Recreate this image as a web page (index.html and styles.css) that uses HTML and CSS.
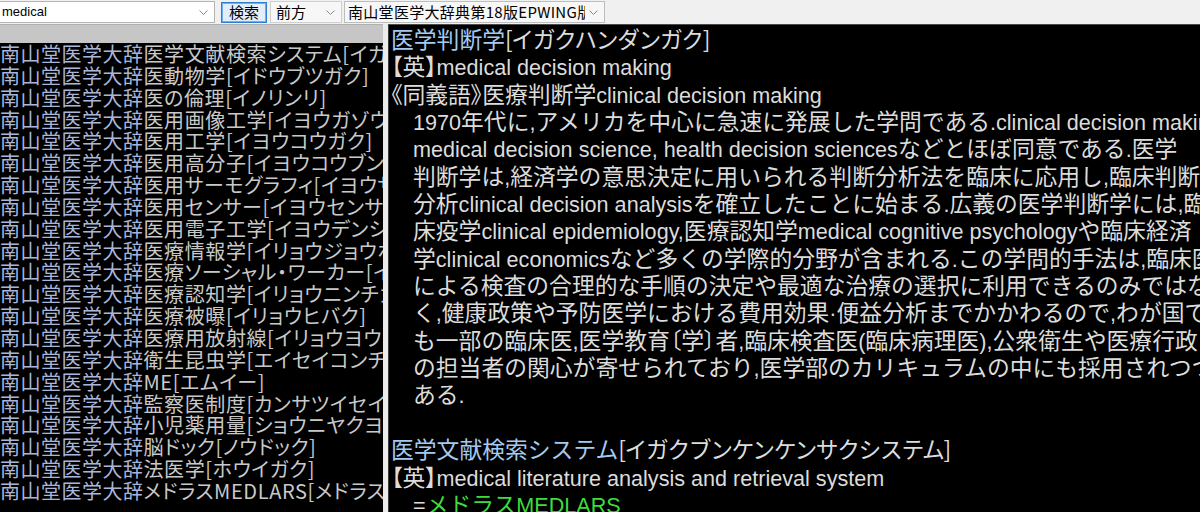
FILE: index.html
```html
<!DOCTYPE html>
<html lang="ja">
<head>
<meta charset="utf-8">
<title>EPWING viewer</title>
<link rel="stylesheet" href="styles.css">
</head>
<body>
<div class="app">
  <div class="toolbar">
    <div class="combo query">
      <span class="val latin">medical</span>
      <svg class="chev" width="9" height="5" viewBox="0 0 9 5"><path d="M0.5 0.5 L4.5 4.5 L8.5 0.5" fill="none" stroke="#8a8a8a" stroke-width="1"/></svg>
    </div>
    <div class="btn">検索</div>
    <div class="combo mode">
      <span class="val">前方</span>
      <svg class="chev" width="9" height="5" viewBox="0 0 9 5"><path d="M0.5 0.5 L4.5 4.5 L8.5 0.5" fill="none" stroke="#8a8a8a" stroke-width="1"/></svg>
    </div>
    <div class="combo dict">
      <span class="val">南山堂医学大辞典第18版EPWING版</span>
      <svg class="chev" width="9" height="5" viewBox="0 0 9 5"><path d="M0.5 0.5 L4.5 4.5 L8.5 0.5" fill="none" stroke="#8a8a8a" stroke-width="1"/></svg>
    </div>
  </div>
  <div class="main">
    <div class="left">
      <div class="header"></div>
      <ul class="list">
        <li><span class="src">南山堂医学大辞</span><span class="ent">医学文献検索システム[イガクブンケンケンサクシステム]</span></li>
        <li><span class="src">南山堂医学大辞</span><span class="ent">医動物学[イドウブツガク]</span></li>
        <li><span class="src">南山堂医学大辞</span><span class="ent">医の倫理[イノリンリ]</span></li>
        <li><span class="src">南山堂医学大辞</span><span class="ent">医用画像工学[イヨウガゾウコウガク]</span></li>
        <li><span class="src">南山堂医学大辞</span><span class="ent">医用工学[イヨウコウガク]</span></li>
        <li><span class="src">南山堂医学大辞</span><span class="ent">医用高分子[イヨウコウブンシ]</span></li>
        <li><span class="src">南山堂医学大辞</span><span class="ent">医用サーモグラフィ[イヨウサーモグラフィ]</span></li>
        <li><span class="src">南山堂医学大辞</span><span class="ent">医用センサー[イヨウセンサー]</span></li>
        <li><span class="src">南山堂医学大辞</span><span class="ent">医用電子工学[イヨウデンシコウガク]</span></li>
        <li><span class="src">南山堂医学大辞</span><span class="ent">医療情報学[イリョウジョウホウガク]</span></li>
        <li><span class="src">南山堂医学大辞</span><span class="ent">医療ソーシャル・ワーカー[イリョウソーシャルワーカー]</span></li>
        <li><span class="src">南山堂医学大辞</span><span class="ent">医療認知学[イリョウニンチガク]</span></li>
        <li><span class="src">南山堂医学大辞</span><span class="ent">医療被曝[イリョウヒバク]</span></li>
        <li><span class="src">南山堂医学大辞</span><span class="ent">医療用放射線[イリョウヨウホウシャセン]</span></li>
        <li><span class="src">南山堂医学大辞</span><span class="ent">衛生昆虫学[エイセイコンチュウガク]</span></li>
        <li><span class="src">南山堂医学大辞</span><span class="ent">ME[エムイー]</span></li>
        <li><span class="src">南山堂医学大辞</span><span class="ent">監察医制度[カンサツイセイド]</span></li>
        <li><span class="src">南山堂医学大辞</span><span class="ent">小児薬用量[ショウニヤクヨウリョウ]</span></li>
        <li><span class="src">南山堂医学大辞</span><span class="ent">脳ドック[ノウドック]</span></li>
        <li><span class="src">南山堂医学大辞</span><span class="ent">法医学[ホウイガク]</span></li>
        <li><span class="src">南山堂医学大辞</span><span class="ent">メドラスMEDLARS[メドラス]</span></li>
      </ul>
    </div>
    <div class="splitter"></div>
    <div class="right">
      <div class="ln"><span class="hw">医学判断学</span><span class="rd">[イガクハンダンガク]</span></div>
      <div class="ln"><span class="p">【英】</span><span class="en">medical decision making</span></div>
      <div class="ln"><span class="p">《同義語》</span>医療判断学<span class="en">clinical decision making</span></div>
      <div class="ln ind"><span class="en">1970</span>年代に<span class="en">,</span>アメリカを中心に急速に発展した学問である<span class="en">.clinical decision making</span></div>
      <div class="ln ind"><span class="en">medical decision science, health decision sciences</span>などとほぼ同意である<span class="en">.</span>医学</div>
      <div class="ln ind">判断学は<span class="en">,</span>経済学の意思決定に用いられる判断分析法を臨床に応用し<span class="en">,</span>臨床判断</div>
      <div class="ln ind">分析<span class="en">clinical decision analysis</span>を確立したことに始まる<span class="en">.</span>広義の医学判断学には<span class="en">,</span>臨</div>
      <div class="ln ind">床疫学<span class="en">clinical epidemiology,</span>医療認知学<span class="en">medical cognitive psychology</span>や臨床経済</div>
      <div class="ln ind">学<span class="en">clinical economics</span>など多くの学際的分野が含まれる<span class="en">.</span>この学問的手法は<span class="en">,</span>臨床医</div>
      <div class="ln ind">による検査の合理的な手順の決定や最適な治療の選択に利用できるのみではな</div>
      <div class="ln ind">く<span class="en">,</span>健康政策や予防医学における費用効果<span class="en">·</span>便益分析までかかわるので<span class="en">,</span>わが国で</div>
      <div class="ln ind">も一部の臨床医<span class="en">,</span>医学教育<span class="p">〔</span>学<span class="p">〕</span>者<span class="en">,</span>臨床検査医<span class="en">(</span>臨床病理医<span class="en">),</span>公衆衛生や医療行政</div>
      <div class="ln ind">の担当者の関心が寄せられており<span class="en">,</span>医学部のカリキュラムの中にも採用されつつ</div>
      <div class="ln ind">ある<span class="en">.</span></div>
      <div class="ln blank"></div>
      <div class="ln"><span class="hw">医学文献検索システム</span><span class="rd">[イガクブンケンケンサクシステム]</span></div>
      <div class="ln"><span class="p">【英】</span><span class="en">medical literature analysis and retrieval system</span></div>
      <div class="ln ind"><span class="en">=</span><span class="link">メドラス<span class="en">MEDLARS</span></span></div>
    </div>
  </div>
</div>
</body>
</html>
```

FILE: styles.css
```css
html, body {
  margin: 0;
  padding: 0;
}

body {
  width: 1200px;
  height: 512px;
  overflow: hidden;
  background: #f0f0f0;
  font-family: "Noto Sans CJK JP", sans-serif;
}

.app {
  display: flex;
  flex-direction: column;
  height: 512px;
}

/* ---------- toolbar ---------- */
.toolbar {
  height: 24px;
  flex: none;
  display: flex;
  align-items: flex-start;
  background: #f0f0f0;
  box-sizing: border-box;
}

.combo {
  box-sizing: border-box;
  height: 22px;
  margin-top: 1px;
  display: flex;
  align-items: center;
  overflow: hidden;
  white-space: nowrap;
  color: #000;
  font-size: 15px;
}

.combo .val {
  flex: 1;
  overflow: hidden;
  line-height: 20px;
}

.combo .chev {
  flex: none;
  margin: 0 6px 0 4px;
}

.query {
  width: 215px;
  background: #fff;
  border: 1px solid #b4b4b4;
  border-left: none;
  padding-left: 2px;
}

.latin {
  font-family: "Liberation Sans", Arial, sans-serif;
  font-size: 13px;
}

.btn {
  box-sizing: border-box;
  width: 46px;
  height: 21px;
  margin: 2px 0 0 6px;
  border: 1px solid #2a7fd4;
  box-shadow: inset 0 0 0 1px #6fb0ec;
  background: #e3eefa;
  font-size: 15px;
  line-height: 18px;
  text-align: center;
  color: #000;
}

.mode {
  width: 72px;
  margin-left: 3px;
  background: #f7f7f7;
  border: 1px solid #cfcfcf;
  padding-left: 5px;
}

.dict {
  width: 261px;
  margin-left: 2px;
  background: #f7f7f7;
  border: 1px solid #bdbdbd;
  padding-left: 3px;
  letter-spacing: 0.3px;
}

/* ---------- main area ---------- */
.main {
  flex: 1;
  min-height: 0;
  display: flex;
}

.left {
  width: 383px;
  flex: none;
  background: #000;
  display: flex;
  flex-direction: column;
  overflow: hidden;
}

.left .header {
  height: 18px;
  flex: none;
  background: #c6c6c6;
  border-top: 1px solid #b0b0b0;
}

.list {
  margin: 0;
  padding: 0;
  list-style: none;
  font-size: 20px;
  line-height: 21.85px;
  letter-spacing: 0.5px;
  white-space: nowrap;
  color: #c9c9c9;
}

.list li {
  overflow: hidden;
}

.list .src {
  color: #a9b6dc;
}

.list .ent {
  font-feature-settings: "palt";
  letter-spacing: 0.6px;
}

.splitter {
  width: 5px;
  flex: none;
  background: #ebebeb;
}

.right {
  flex: 1;
  min-width: 0;
  background: #000;
  border-left: 1px solid #3c3c3c;
  border-top: 1px solid #4a4a4a;
  padding-left: 2px;
  font-size: 22.8px;
  line-height: 27.35px;
  color: #dcdcdc;
  white-space: nowrap;
  overflow: hidden;
}

.ln {
  height: 27.35px;
}

.ind {
  padding-left: 22px;
}

.en {
  font-family: "Liberation Sans", Arial, sans-serif;
  font-size: 21.6px;
}

.hw {
  color: #a3caf2;
}

.rd {
  letter-spacing: -1.4px;
}

.p {
  font-feature-settings: "palt";
}

.link {
  color: #3ddc3d;
}
```
